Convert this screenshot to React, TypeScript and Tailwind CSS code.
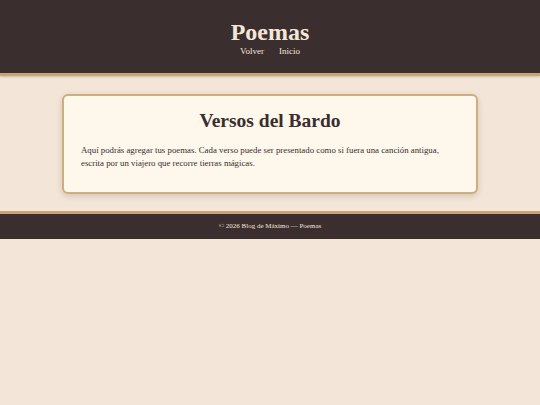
export default function App() {
  return (
    <div className="min-h-[405px] bg-[#f3e6d8] font-['Liberation_Serif',Georgia,serif] text-[#3b2e2e]">
      <header className="flex h-[76px] flex-col items-center border-b-[3px] border-[#c9a478] bg-[#3b2e2e] pt-[20px] text-[#f3e6d8] shadow-[0_1px_2px_rgba(120,90,50,0.3)]">
        <h1 className="text-[24px] font-bold leading-[25px]">Poemas</h1>
        <nav className="flex gap-[15px] text-[9px] leading-[12px]">
          <a>Volver</a>
          <a>Inicio</a>
        </nav>
      </header>
      <main className="px-[62px] pb-[17px] pt-[18px]">
        <section className="rounded-[6px] border-2 border-[#cfae7e] bg-[#fdf7ec] px-[17px] pb-[22px] pt-[13px] shadow-[0_2px_6px_rgba(0,0,0,0.15)]">
          <h2 className="mb-[11px] text-center text-[19.5px] font-bold leading-[24px]">Versos del Bardo</h2>
          <p className="text-[8.8px] leading-[13px]">
            Aquí podrás agregar tus poemas. Cada verso puede ser presentado como si fuera una canción antigua, escrita por un viajero que recorre tierras mágicas.
          </p>
        </section>
      </main>
      <footer className="flex h-[28px] items-center justify-center border-t-[3px] border-[#c9a478] bg-[#3b2e2e] text-[7px] text-[#f3e6d8]">
        © 2026 Blog de Máximo — Poemas
      </footer>
    </div>
  );
}
